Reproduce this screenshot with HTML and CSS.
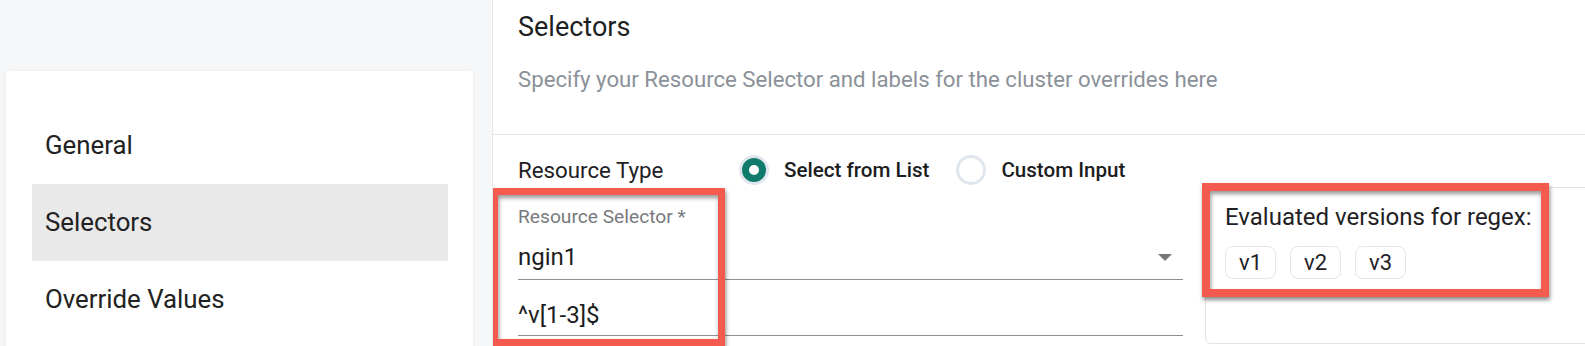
FILE: index.html
```html
<!DOCTYPE html>
<html lang="en">
<head>
    <meta charset="UTF-8">
    <meta name="viewport" content="width=device-width, initial-scale=1.0">
    <title>Cluster Override - Selectors</title>
    <link rel="stylesheet" href="styles.css">
</head>
<body>
    <!-- Left step navigation -->
    <aside class="sidebar">
        <nav class="side-card">
            <div class="side-item">General</div>
            <div class="side-item active">Selectors</div>
            <div class="side-item">Override Values</div>
        </nav>
    </aside>

    <!-- Selectors panel -->
    <main class="panel">
        <header class="panel-head">
            <h2>Selectors</h2>
            <p>Specify your Resource Selector and labels for the cluster overrides here</p>
        </header>

        <section class="panel-body">
            <div class="type-row">
                <span class="type-label">Resource Type</span>
                <label class="radio-opt"><span class="radio checked"></span>Select from List</label>
                <label class="radio-opt"><span class="radio"></span>Custom Input</label>
            </div>

            <div class="form-row">
                <div class="fields">
                    <div class="field">
                        <span class="field-label">Resource Selector *</span>
                        <div class="field-input select-input">ngin1<span class="arrow"></span></div>
                    </div>
                    <div class="field">
                        <div class="field-input regex-input">^v[1-3]$</div>
                    </div>
                    <!-- annotation frame -->
                    <div class="mark mark-fields"></div>
                </div>

                <div class="eval-box">
                    <div class="eval-title">Evaluated versions for regex:</div>
                    <div class="chips">
                        <span class="chip">v1</span>
                        <span class="chip">v2</span>
                        <span class="chip">v3</span>
                    </div>
                    <!-- annotation frame -->
                    <div class="mark mark-eval"></div>
                </div>
            </div>
        </section>
    </main>
</body>
</html>
```

FILE: styles.css
```css
* {
    box-sizing: border-box;
}

body {
    margin: 0;
    height: 346px;
    display: flex;
    overflow: hidden;
    font-family: Roboto, 'Noto Sans', sans-serif;
    background-color: #f6f7f9;
    color: #1f2124;
}

/* Sidebar */
.sidebar {
    width: 492px;
    flex-shrink: 0;
    padding: 71px 19px 0 6px;
}

.side-card {
    height: 275px;
    background-color: #fff;
    border-radius: 4px 4px 0 0;
    box-shadow: 0 1px 5px rgba(0, 0, 0, 0.07);
    padding: 36px 25px 0 26px;
}

.side-item {
    height: 77px;
    line-height: 77px;
    padding-left: 13px;
    font-size: 25.8px;
    color: #222;
}

.side-item.active {
    background-color: #e9e9e9;
}

/* Main panel */
.panel {
    flex: 1;
    min-width: 0;
    background-color: #fff;
    border-left: 1px solid #e6e8eb;
    overflow: hidden;
}

.panel-head {
    padding: 11px 0 40px 25px;
    border-bottom: 1px solid #e4e6e9;
}

.panel-head h2 {
    margin: 0;
    font-size: 27px;
    line-height: 32px;
    font-weight: 400;
    color: #1d1f22;
}

.panel-head p {
    margin: 21px 0 0;
    font-size: 22.2px;
    line-height: 30px;
    color: #8b9199;
}

.panel-body {
    padding-left: 25px;
}

/* Resource type radios */
.type-row {
    display: flex;
    align-items: center;
    height: 32px;
    margin-top: 19px;
}

.type-label {
    width: 224px;
    font-size: 22.3px;
}

.radio-opt {
    display: flex;
    align-items: center;
    gap: 18px;
    margin-right: 30px;
    font-size: 20.6px;
    font-weight: 500;
    color: #1b1d20;
}

.radio {
    position: relative;
    width: 24px;
    height: 24px;
    border-radius: 50%;
    background-color: #fff;
    box-shadow: 0 0 0 3px #e0e6ed;
}

.radio.checked {
    background-color: #0f7b6b;
}

.radio.checked::after {
    content: '';
    position: absolute;
    top: 7px;
    left: 7px;
    width: 10px;
    height: 10px;
    border-radius: 50%;
    background-color: #fff;
}

/* Selector fields + evaluated versions */
.form-row {
    display: flex;
    margin-top: 1px;
}

.fields {
    position: relative;
    width: 665px;
    flex-shrink: 0;
    margin-right: 22px;
}

.field-label {
    display: block;
    padding-top: 18px;
    font-size: 19.2px;
    line-height: 24px;
    color: #77797c;
}

.field-input {
    position: relative;
    font-size: 24px;
    line-height: 30px;
    color: #1c1e21;
    border-bottom: 1px solid #8d8f92;
}

.select-input {
    margin-top: 13px;
    padding-bottom: 7px;
}

.regex-input {
    margin-top: 20px;
    padding-bottom: 5px;
}

.arrow {
    position: absolute;
    right: 11px;
    top: 12px;
    border-left: 7px solid transparent;
    border-right: 7px solid transparent;
    border-top: 7px solid #76787b;
}

.eval-box {
    position: relative;
    width: 420px;
    height: 157px;
    flex-shrink: 0;
    border: 1px solid #e2e4e7;
    border-radius: 6px;
    padding: 15px 19px;
}

.eval-title {
    font-size: 24px;
    line-height: 28px;
    color: #1f2124;
}

.chips {
    display: flex;
    gap: 14px;
    margin-top: 15px;
}

.chip {
    height: 33px;
    padding: 0 13px;
    line-height: 31px;
    font-size: 22px;
    border: 1px solid #e3e5e8;
    border-radius: 8px;
    color: #1f2124;
}

/* Red annotation frames drawn over the form */
.mark {
    position: absolute;
    border: 7px solid #f45a4e;
    box-shadow: 1px 3px 4px rgba(0, 0, 0, 0.45), inset 1px 3px 4px rgba(0, 0, 0, 0.4);
    pointer-events: none;
}

.mark-fields {
    left: -27px;
    top: 1px;
    width: 234px;
    height: 158px;
}

.mark-eval {
    left: -4px;
    top: -5px;
    width: 347px;
    height: 114px;
    border-width: 8px;
}
```
